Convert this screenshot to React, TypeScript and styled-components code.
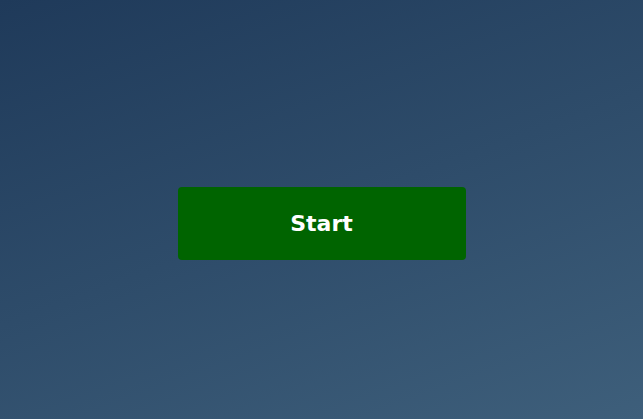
import React from "react";
import styled, { createGlobalStyle } from "styled-components";

const GlobalStyle = createGlobalStyle`
  html, body {
    margin: 0;
    padding: 0;
  }
  body {
    font-family: "DejaVu Sans", Verdana, sans-serif;
  }
  * { box-sizing: border-box; }
`;

const Screen = styled.div`
  min-height: 100vh;
  display: flex;
  align-items: center;
  justify-content: center;
  padding-top: 28px;
  background: linear-gradient(160deg, #1f3a5a 0%, #2e4c6a 50%, #3e5f7b 100%);
`;

const StartButton = styled.button`
  width: 288px;
  height: 73px;
  border: none;
  border-radius: 4px;
  background: #006400;
  color: #ffffff;
  font-family: "DejaVu Sans", Verdana, sans-serif;
  font-weight: bold;
  font-size: 22px;
  cursor: pointer;
`;

export default function App() {
  return (
    <>
      <GlobalStyle />
      <Screen>
        <StartButton>Start</StartButton>
      </Screen>
    </>
  );
}
